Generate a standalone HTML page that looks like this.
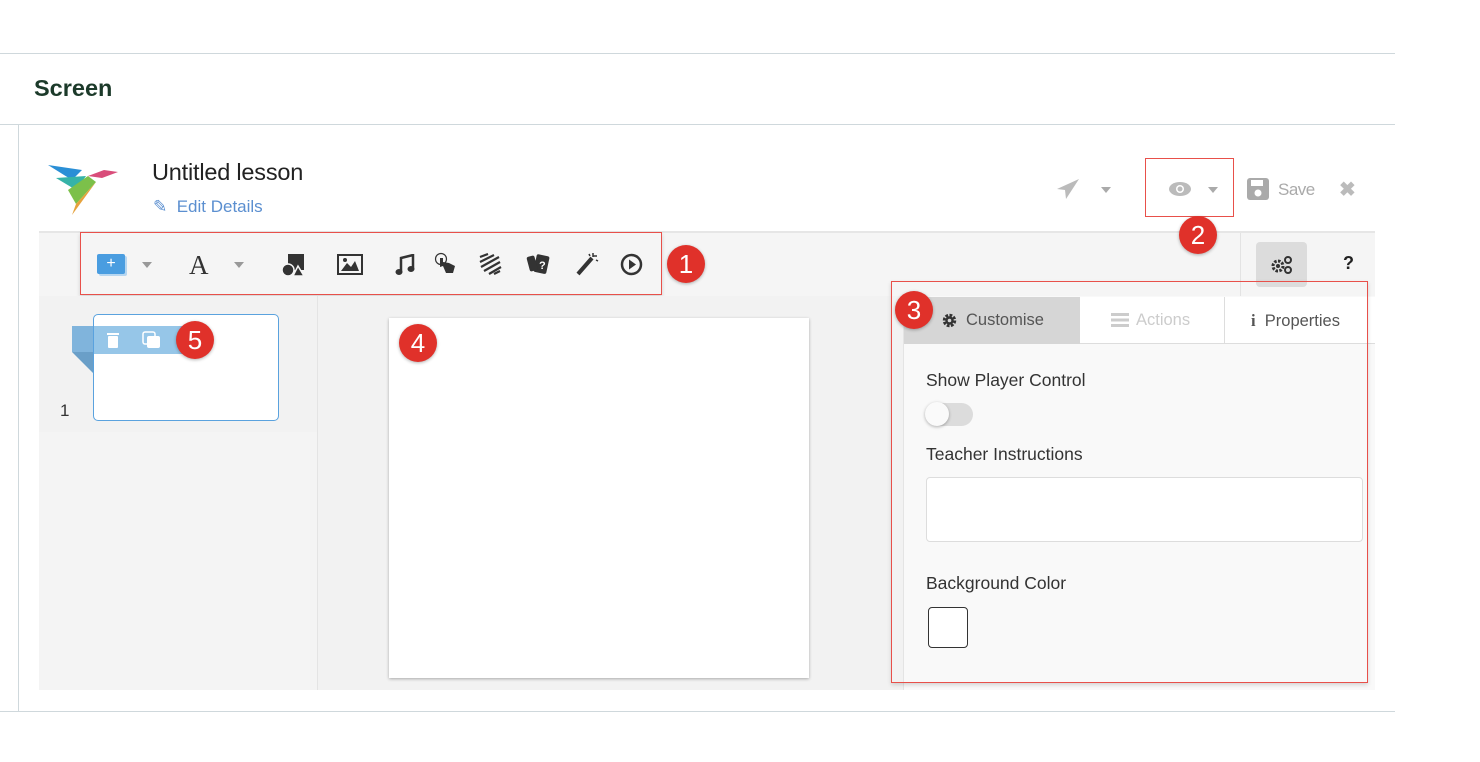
<!DOCTYPE html>
<html><head><meta charset="utf-8"><style>
*{box-sizing:border-box;margin:0;padding:0}
body{width:1480px;height:762px;background:#fff;font-family:"Liberation Sans",sans-serif;position:relative;overflow:hidden}
.a{position:absolute}
.badge{position:absolute;width:38px;height:38px;border-radius:50%;background:#e0312a;color:#fff;font-size:26px;text-align:center;line-height:38px;box-shadow:0 1px 3px rgba(0,0,0,.3)}
.rb{position:absolute;border:1.5px solid #e8504a}
.ic{position:absolute;color:#333;font-size:18px}
</style></head><body>
<div class="a" style="left:0;top:53px;width:1395px;height:1px;background:#cfd8dc"></div>
<div class="a" style="left:34px;top:75px;font-size:23.5px;font-weight:bold;color:#1c3a2a">Screen</div>
<div class="a" style="left:0;top:124px;width:1395px;height:1px;background:#cfd8dc"></div>
<div class="a" style="left:18px;top:124px;width:1px;height:587px;background:#cfd8dc"></div>
<div class="a" style="left:0;top:711px;width:1395px;height:1px;background:#cfd8dc"></div>

<svg class="a" style="left:46px;top:160px" width="74" height="56" viewBox="0 0 74 56">
<polygon points="2,5 36,10 26,20" fill="#2a8fd6"/>
<polygon points="10,18 40,16 30,30" fill="#36b3a8"/>
<polygon points="22,30 42,16 50,22 30,44" fill="#7cc04a"/>
<polygon points="30,44 50,22 26,55" fill="#e6a23c"/>
<polygon points="42,16 58,10 72,12 56,18" fill="#d94d7a"/>
</svg>
<div class="a" style="left:152px;top:159px;font-size:23.5px;color:#222;letter-spacing:-.2px">Untitled lesson</div>
<div class="a" style="left:153px;top:197px;font-size:17px;color:#5b8fd0">&#9998;&nbsp; Edit Details</div>

<svg class="a" style="left:1056px;top:178px" width="24" height="22" viewBox="0 0 24 22"><path d="M23 1 L1 11 L9 12 L10 21 Z" fill="#bbb"/></svg>
<div class="a" style="left:1101px;top:187px;border:5px solid transparent;border-top:6px solid #aaa"></div>
<svg class="a" style="left:1168px;top:181px" width="24" height="16" viewBox="0 0 24 16"><ellipse cx="12" cy="8" rx="11" ry="7" fill="#bbb"/><circle cx="12" cy="8" r="4" fill="#fff"/><circle cx="12" cy="8" r="2.5" fill="#bbb"/></svg>
<div class="a" style="left:1208px;top:187px;border:5px solid transparent;border-top:6px solid #aaa"></div>
<div class="rb" style="left:1145px;top:158px;width:89px;height:59px"></div>
<svg class="a" style="left:1247px;top:178px" width="22" height="22" viewBox="0 0 22 22"><rect x="0" y="0" width="22" height="22" rx="3" fill="#aaa"/><rect x="4" y="2" width="12" height="6" fill="#fff"/><circle cx="11" cy="15" r="3.5" fill="#fff"/></svg>
<div class="a" style="left:1278px;top:180px;font-size:17px;color:#aaa;letter-spacing:-.5px">Save</div>
<div class="a" style="left:1339px;top:177px;font-size:20px;color:#bbb;font-weight:bold">&#10006;</div>

<div class="a" style="left:39px;top:231px;width:1336px;height:65px;background:#f5f5f5;border-top:2px solid #e6e6e6"></div>
<div class="a" style="left:1240px;top:233px;width:1px;height:63px;background:#e3e3e3"></div>
<div class="a" style="left:1256px;top:242px;width:51px;height:45px;background:#dcdcdc;border-radius:4px"></div>
<svg class="a" style="left:1270px;top:255px" width="24" height="20" viewBox="0 0 24 20"><circle cx="8" cy="11" r="5" fill="none" stroke="#333" stroke-width="3" stroke-dasharray="2.5 1.4"/><circle cx="8" cy="11" r="2" fill="#333"/><circle cx="18" cy="5" r="3" fill="none" stroke="#333" stroke-width="2"/><circle cx="18" cy="15" r="3" fill="none" stroke="#333" stroke-width="2"/></svg>
<div class="a" style="left:1343px;top:253px;font-size:18px;font-weight:bold;color:#222">?</div>
<div class="badge" style="left:1179px;top:216px">2</div>

<div class="rb" style="left:80px;top:232px;width:582px;height:63px;box-shadow:0 2px 4px rgba(0,0,0,.15)"></div>
<div class="a" style="left:97px;top:254px;width:28px;height:20px;background:#4a9de0;border-radius:2px;color:#fff;font-size:16px;text-align:center;line-height:19px;box-shadow:2px 2px 0 #b6d6f0">+</div>
<div class="a" style="left:142px;top:262px;border:5px solid transparent;border-top:6px solid #999"></div>
<div class="a" style="left:189px;top:250px;font-family:'Liberation Serif',serif;font-size:27px;color:#333">A</div>
<div class="a" style="left:234px;top:262px;border:5px solid transparent;border-top:6px solid #999"></div>
<svg class="a" style="left:282px;top:254px" width="22" height="22" viewBox="0 0 22 22"><rect x="6" y="0" width="16" height="16" fill="#333"/><circle cx="6" cy="16" r="6" fill="#333" stroke="#f5f5f5" stroke-width="1.5"/><polygon points="11,22 16,12 22,22" fill="#333" stroke="#f5f5f5" stroke-width="1.5"/></svg>
<svg class="a" style="left:337px;top:254px" width="26" height="21" viewBox="0 0 26 21"><rect x="1" y="1" width="24" height="19" fill="none" stroke="#333" stroke-width="2"/><polygon points="4,17 10,9 14,13 18,7 22,17" fill="#333"/><circle cx="8" cy="6" r="2" fill="#333"/></svg>
<svg class="a" style="left:394px;top:254px" width="22" height="22" viewBox="0 0 22 22"><path d="M7 18V4L19 1V15" fill="none" stroke="#333" stroke-width="2.5"/><ellipse cx="5" cy="18" rx="3.5" ry="3" fill="#333"/><ellipse cx="17" cy="15" rx="3.5" ry="3" fill="#333"/></svg>
<svg class="a" style="left:434px;top:252px" width="24" height="24" viewBox="0 0 24 24"><circle cx="7" cy="7" r="5.5" fill="none" stroke="#333" stroke-width="1.2"/><path d="M6 6L6 15 9 14 12 21 19 21 21 14 15 11 9 10 9 6Z" fill="#333"/></svg>
<svg class="a" style="left:478px;top:253px" width="24" height="22" viewBox="0 0 24 22"><path d="M2 4l8-3M2 9l14-7M3 14l18-10M6 18l16-9M11 21l12-7M16 21l6-3" stroke="#333" stroke-width="2.2"/></svg>
<svg class="a" style="left:526px;top:253px" width="24" height="22" viewBox="0 0 24 22"><rect x="9" y="2" width="13" height="18" rx="2" transform="rotate(12 15 11)" fill="#333"/><rect x="2" y="3" width="8" height="15" rx="2" transform="rotate(-15 6 10)" fill="#333"/><text x="13" y="16" font-size="11" fill="#fff" font-family="Liberation Sans" font-weight="bold">?</text></svg>
<svg class="a" style="left:575px;top:252px" width="24" height="24" viewBox="0 0 24 24"><path d="M3 22L17 6" stroke="#333" stroke-width="4"/><path d="M18 1v4M22 4h-4M21 8l2 1M14 2l1 2" stroke="#333" stroke-width="1.5"/></svg>
<svg class="a" style="left:620px;top:253px" width="23" height="23" viewBox="0 0 23 23"><circle cx="11.5" cy="11.5" r="9.5" fill="none" stroke="#333" stroke-width="2.5"/><polygon points="9,6.5 16,11.5 9,16.5" fill="#333"/></svg>
<div class="badge" style="left:667px;top:245px">1</div>

<div class="a" style="left:39px;top:296px;width:278px;height:394px;background:#f2f2f2"></div>
<div class="a" style="left:39px;top:432px;width:278px;height:258px;background:#f4f4f4"></div>
<div class="a" style="left:317px;top:296px;width:1px;height:394px;background:#e4e4e4"></div>
<div class="a" style="left:60px;top:401px;font-size:17px;color:#333">1</div>
<div class="a" style="left:72px;top:326px;width:22px;height:26px;background:#80b4dc"></div>
<div class="a" style="left:72px;top:352px;border-top:22px solid #6a9fc8;border-left:22px solid transparent"></div>
<div class="a" style="left:93px;top:314px;width:186px;height:107px;background:#fff;border:1.5px solid #5aa2de;border-radius:5px"></div>
<div class="a" style="left:94px;top:326px;width:96px;height:28px;background:#96c6e8"></div>
<svg class="a" style="left:106px;top:332px" width="14" height="16" viewBox="0 0 14 16"><rect x="1" y="1" width="12" height="2" fill="#fff"/><rect x="2" y="4" width="10" height="12" rx="1" fill="#fff"/></svg>
<svg class="a" style="left:142px;top:331px" width="20" height="18" viewBox="0 0 20 18"><rect x="1" y="1" width="12" height="12" rx="2" fill="none" stroke="#fff" stroke-width="1.5"/><rect x="5" y="5" width="13" height="12" rx="2" fill="#fff"/></svg>
<div class="badge" style="left:176px;top:321px">5</div>

<div class="a" style="left:318px;top:296px;width:585px;height:394px;background:#f2f2f2"></div>
<div class="a" style="left:389px;top:318px;width:420px;height:360px;background:#fff;box-shadow:0 1px 3px rgba(0,0,0,.3)"></div>
<div class="badge" style="left:399px;top:324px">4</div>

<div class="a" style="left:903px;top:296px;width:472px;height:394px;background:#f9f9f9;border-left:1px solid #e4e4e4"></div>
<div class="a" style="left:904px;top:297px;width:176px;height:47px;background:#d6d6d6"></div>
<div class="a" style="left:1080px;top:297px;width:295px;height:47px;background:#fff;border-bottom:1px solid #ddd"></div>
<div class="a" style="left:1224px;top:297px;width:1px;height:47px;background:#ddd"></div>
<svg class="a" style="left:942px;top:313px" width="15" height="15" viewBox="0 0 15 15"><circle cx="7.5" cy="7.5" r="5" fill="none" stroke="#333" stroke-width="3.5" stroke-dasharray="2.6 1.3"/><circle cx="7.5" cy="7.5" r="4.2" fill="#333"/><circle cx="7.5" cy="7.5" r="1.8" fill="#d6d6d6"/></svg>
<div class="a" style="left:966px;top:311px;font-size:16.5px;color:#555">Customise</div>
<svg class="a" style="left:1111px;top:313px" width="18" height="14" viewBox="0 0 18 14"><rect y="0" width="18" height="3" fill="#ccc"/><rect y="5.5" width="18" height="3" fill="#ccc"/><rect y="11" width="18" height="3" fill="#ccc"/></svg>
<div class="a" style="left:1136px;top:311px;font-size:16.5px;color:#ccc">Actions</div>
<div class="a" style="left:1251px;top:311px;font-size:16.5px;color:#555"><b style="font-family:'Liberation Serif',serif">i</b>&nbsp;&nbsp;Properties</div>
<div class="a" style="left:926px;top:370px;font-size:17.5px;color:#333">Show Player Control</div>
<div class="a" style="left:926px;top:403px;width:47px;height:23px;background:#dcdcdc;border-radius:12px"></div>
<div class="a" style="left:925px;top:402px;width:24px;height:24px;background:#fafafa;border-radius:50%;box-shadow:0 1px 3px rgba(0,0,0,.3)"></div>
<div class="a" style="left:926px;top:444px;font-size:17.5px;color:#333">Teacher Instructions</div>
<div class="a" style="left:926px;top:477px;width:437px;height:65px;background:#fff;border:1px solid #ddd;border-radius:4px"></div>
<div class="a" style="left:926px;top:573px;font-size:17.5px;color:#333">Background Color</div>
<div class="a" style="left:928px;top:607px;width:40px;height:41px;background:#fff;border:1.5px solid #333;border-radius:4px"></div>
<div class="rb" style="left:891px;top:281px;width:477px;height:402px;box-shadow:0 2px 4px rgba(0,0,0,.15)"></div>
<div class="badge" style="left:895px;top:291px">3</div>
</body></html>
